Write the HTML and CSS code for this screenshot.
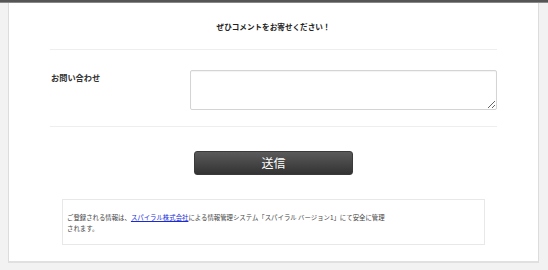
FILE: index.html
```html
<!DOCTYPE html>
<html lang="ja">

<head>
    <meta charset="UTF-8">
    <meta name="viewport" content="width=device-width, initial-scale=1.0">
    <title>お問い合わせ</title>
    <link rel="stylesheet" href="styles.css">
</head>

<body>
    <div class="topbar"></div>

    <div class="page">
        <div class="panel">
            <h1 class="lead">ぜひコメントをお寄せください！</h1>

            <form class="form">
                <div class="form-row">
                    <label for="comment">お問い合わせ</label>
                    <textarea id="comment"></textarea>
                </div>

                <div class="submit-area">
                    <button type="submit" class="send-btn">送信</button>
                </div>
            </form>

            <div class="notice">
                <p>ご登録される情報は、<a href="#">スパイラル株式会社</a>による情報管理システム「スパイラル バージョン1」にて安全に管理<br>されます。</p>
            </div>
        </div>
    </div>
</body>

</html>
```

FILE: styles.css
```css
* {
    margin: 0;
    padding: 0;
    box-sizing: border-box;
    font-family: "Noto Sans CJK JP", "Noto Sans", sans-serif;
}

body {
    background: #f2f2f2;
    color: #333;
}

.topbar {
    height: 3px;
    background: #555;
    border-bottom: 1px solid #888;
}

.page {
    padding: 0 9px 0 8px;
}

.panel {
    background: white;
    border-left: 1px solid #dcdcdc;
    border-right: 1px solid #dcdcdc;
    border-bottom: 2px solid #e0e0e0;
    padding: 0 41px 18px;
    height: 260px;
}

.lead {
    font-size: 7.6px;
    font-weight: bold;
    text-align: center;
    line-height: 11px;
    padding-top: 18px;
    padding-bottom: 17px;
    border-bottom: 1px solid #eee;
    color: #222;
}

.form-row {
    display: flex;
    align-items: flex-start;
    padding: 20px 0 16px;
    border-bottom: 1px solid #eee;
}

.form-row label {
    width: 140px;
    font-size: 8.2px;
    font-weight: bold;
    line-height: 10px;
    padding-top: 2px;
    padding-left: 1px;
    color: #333;
}

.form-row textarea {
    flex: 1;
    height: 40px;
    border: 1px solid #d4d4d4;
    border-radius: 2px;
    box-shadow: inset 0 1px 1px rgba(0, 0, 0, 0.05);
    resize: vertical;
}

.submit-area {
    display: flex;
    justify-content: center;
    padding-top: 24px;
}

.send-btn {
    width: 159px;
    height: 24px;
    border: 1px solid #3a3a3a;
    border-radius: 3px;
    background: linear-gradient(#5a5a5a, #333);
    color: white;
    font-size: 12px;
    line-height: 22px;
    cursor: pointer;
}

.notice {
    margin: 24px 12px 0;
    height: 46px;
    border: 1px solid #e8e8e8;
    padding: 12px 4px 0;
}

.notice p {
    font-size: 6.4px;
    line-height: 11px;
    color: #444;
}

.notice a {
    color: #1a2bd6;
}
```
